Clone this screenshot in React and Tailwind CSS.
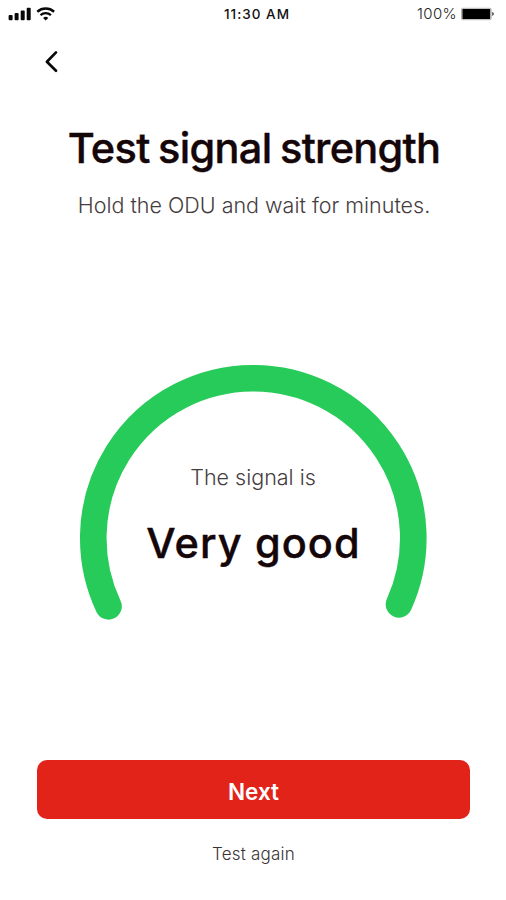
function SignalBars() {
  return (
    <svg className="h-[14px] w-6" viewBox="0 0 24 14" fill="#080808">
      <rect x="0.6" y="8.1" width="4" height="5.2" rx="1" />
      <rect x="6.6" y="5.9" width="4" height="7.4" rx="1" />
      <rect x="12.7" y="3.4" width="4" height="9.9" rx="1" />
      <rect x="18.7" y="0.8" width="4" height="12.5" rx="1" />
    </svg>
  );
}

function Wifi() {
  return (
    <svg className="ml-1 h-[14px] w-[20px]" viewBox="0 0 20 14" fill="none" stroke="#080808">
      <path d="M1.3 4.7A13 13 0 0 1 18.1 4.7" strokeWidth="2.5" />
      <path d="M4.5 8.1A8 8 0 0 1 14.9 8.1" strokeWidth="2.3" />
      <path d="M7.1 10.9A4 4 0 0 1 12.3 10.9L9.7 13.5Z" fill="#080808" stroke="none" />
    </svg>
  );
}

function Battery() {
  return (
    <svg className="h-[14px] w-[34px]" viewBox="0 0 34 14">
      <rect x="0.5" y="1.3" width="29.6" height="11.4" rx="1.2" fill="#fff" stroke="#999" strokeWidth="0.8" />
      <rect x="1.4" y="2" width="27.8" height="10" rx="0.6" fill="#000" />
      <path d="M31.1 5.1C33.5 5.5 33.5 8.5 31.1 8.9Z" fill="#555" />
    </svg>
  );
}

export default function App() {
  return (
    <main className="flex h-[900px] w-[506px] flex-col overflow-hidden bg-white font-['Inter',sans-serif] text-[#140609]">
      <header className="grid h-7 grid-cols-3 items-center pl-2 pr-[11px]">
        <div className="flex items-center">
          <SignalBars />
          <Wifi />
        </div>
        <span className="whitespace-nowrap pl-[11px] pt-px text-center text-[13.5px] font-medium tracking-[1px] text-[#111]">11:30 AM</span>
        <div className="flex items-center justify-end gap-1">
          <span className="text-[15px] font-light tracking-[0.35px] text-[#222]">100%</span>
          <Battery />
        </div>
      </header>

      <nav className="h-[68px] pl-[44px] pt-[22px]">
        <button aria-label="Back" className="block">
          <svg className="h-6 w-4" viewBox="0 0 16 24" fill="none" stroke="#090909" strokeWidth="2.7" strokeLinecap="round" strokeLinejoin="round">
            <path d="M12 2.4L2.9 11.7L12 20.8" />
          </svg>
        </button>
      </nav>

      <section className="flex flex-col items-center pt-[26px] text-center">
        <h1 className="whitespace-nowrap pl-[2px] text-[41.5px] font-medium leading-[52px] tracking-[-0.7px] [-webkit-text-stroke:0.4px_#140609] [word-spacing:-1.8px]">Test signal strength</h1>
        <p className="mt-[16px] whitespace-nowrap pl-[2px] text-[21.5px] font-light leading-[30px] text-[#453c3e]">Hold the ODU and wait for minutes.</p>
      </section>

      <section className="mt-[142px] grid h-[260px] w-full">
        <svg className="col-start-1 row-start-1 h-[260px] w-[506px]" viewBox="0 0 506 260" fill="none">
          <path d="M108.5 244.3A160 160 0 1 1 399 242.3" stroke="#27cb59" strokeWidth="26.6" strokeLinecap="round" />
        </svg>
        <div className="col-start-1 row-start-1 flex flex-col items-center pt-[100px]">
          <p className="whitespace-nowrap text-[21.5px] font-light leading-[30px] text-[#453c3e]">The signal is</p>
          <p className="mt-[25px] whitespace-nowrap pl-px text-[41.5px] font-medium leading-[52px] tracking-[1.1px] [-webkit-text-stroke:0.4px_#140609]">Very good</p>
        </div>
      </section>

      <footer className="mt-auto flex flex-col items-center px-9 pb-[32px] pl-[37px]">
        <button className="h-[59px] w-full rounded-[10px] bg-[#e2231a] pt-[4px] text-[22.5px] font-semibold text-white">Next</button>
        <button className="mt-[22px] h-[27px] text-[17px] font-light leading-[27px] tracking-[0.2px] text-[#3a3335]">Test again</button>
      </footer>
    </main>
  );
}
